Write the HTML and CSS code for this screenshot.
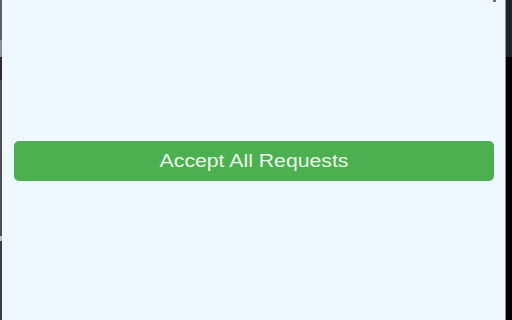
FILE: index.html
```html
<!DOCTYPE html>
<html lang="en">
<head>
<meta charset="utf-8">
<title>Accept All Requests</title>
<link rel="stylesheet" href="styles.css">
</head>
<body>
<div class="frame">
  <div class="edge-left"></div>
  <main class="panel">
    <span class="tick"></span>
    <button class="accept-btn" type="button"><span class="accept-label">Accept All Requests</span></button>
  </main>
  <div class="edge-right">
    <div class="edge-right-top"></div>
    <div class="edge-right-bottom"></div>
  </div>
</div>
</body>
</html>
```
FILE: styles.css
```css
html, body {
  margin: 0;
  padding: 0;
  width: 512px;
  height: 320px;
  overflow: hidden;
  background: #000;
}

.frame {
  display: flex;
  width: 512px;
  height: 320px;
}

.edge-left {
  width: 2px;
  flex: none;
  background: linear-gradient(to bottom,
    #5a6066 0, #5a6066 40px,
    #8a9096 40px, #8a9096 57px,
    #2a2e33 57px, #2a2e33 80px,
    #4a5056 80px, #4a5056 236px,
    #b8bec4 236px, #b8bec4 241px,
    #3a3f44 241px);
}

.panel {
  position: relative;
  flex: none;
  width: 504px;
  box-sizing: border-box;
  padding: 141px 11px 0 12px;
  background: #eff7ff;
  border-right: 1px solid #8d969c;
}

.tick {
  position: absolute;
  top: 0;
  left: 491px;
  width: 3px;
  height: 2px;
  background: #6b6f74;
}

.accept-btn {
  display: flex;
  align-items: center;
  justify-content: center;
  width: 480px;
  height: 40px;
  margin: 0;
  padding: 0;
  border: none;
  border-radius: 5px;
  background: #4caf50;
  color: #eaf6ea;
  font-family: "Liberation Sans", Arial, sans-serif;
  font-size: 18px;
  cursor: pointer;
}

.accept-label {
  display: inline-block;
  transform: scaleX(1.18);
}

.edge-right {
  flex: 1;
  display: flex;
  flex-direction: column;
}

.edge-right-top {
  height: 57px;
  background: #1f2328;
}

.edge-right-bottom {
  flex: 1;
  background: #000;
}
```
